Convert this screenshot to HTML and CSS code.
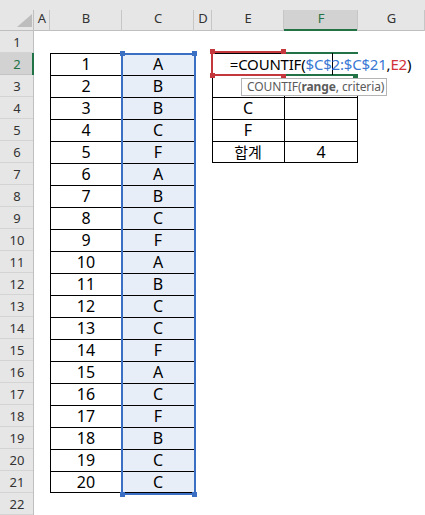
FILE: index.html
```html
<!DOCTYPE html>
<html lang="ko">
<head>
    <meta charset="UTF-8">
    <meta name="viewport" content="width=device-width, initial-scale=1.0">
    <title>COUNTIF 입력</title>
    <link rel="stylesheet" href="styles.css">
</head>
<body>

<div class="sheet">
    <!-- 열 머리글 -->
    <div class="head">
        <div class="corner"><span class="corner-tri"></span></div>
        <div class="col-hd">A</div>
        <div class="col-hd">B</div>
        <div class="col-hd">C</div>
        <div class="col-hd">D</div>
        <div class="col-hd">E</div>
        <div class="col-hd on">F</div>
        <div class="col-hd">G</div>
    </div>

    <!-- 행 (E2, E3 값은 수식/도움말에 가려져 보이지 않음) -->
    <div class="row"><div class="rh">1</div><div></div><div></div><div></div><div></div><div></div><div></div><div></div></div>
    <div class="row"><div class="rh on">2</div><div></div><div class="c t">1</div><div class="c t sel">A</div><div></div><div class="c t"></div><div class="c t r"></div><div></div></div>
    <div class="row"><div class="rh">3</div><div></div><div class="c t">2</div><div class="c t sel">B</div><div></div><div class="c t"></div><div class="c t r"></div><div></div></div>
    <div class="row"><div class="rh">4</div><div></div><div class="c t">3</div><div class="c t sel">B</div><div></div><div class="c t">C</div><div class="c t r"></div><div></div></div>
    <div class="row"><div class="rh">5</div><div></div><div class="c t">4</div><div class="c t sel">C</div><div></div><div class="c t">F</div><div class="c t r"></div><div></div></div>
    <div class="row"><div class="rh">6</div><div></div><div class="c t">5</div><div class="c t sel">F</div><div></div><div class="c t b ko">합계</div><div class="c t r b">4</div><div></div></div>
    <div class="row"><div class="rh">7</div><div></div><div class="c t">6</div><div class="c t sel">A</div><div></div><div></div><div></div><div></div></div>
    <div class="row"><div class="rh">8</div><div></div><div class="c t">7</div><div class="c t sel">B</div><div></div><div></div><div></div><div></div></div>
    <div class="row"><div class="rh">9</div><div></div><div class="c t">8</div><div class="c t sel">C</div><div></div><div></div><div></div><div></div></div>
    <div class="row"><div class="rh">10</div><div></div><div class="c t">9</div><div class="c t sel">F</div><div></div><div></div><div></div><div></div></div>
    <div class="row"><div class="rh">11</div><div></div><div class="c t">10</div><div class="c t sel">A</div><div></div><div></div><div></div><div></div></div>
    <div class="row"><div class="rh">12</div><div></div><div class="c t">11</div><div class="c t sel">B</div><div></div><div></div><div></div><div></div></div>
    <div class="row"><div class="rh">13</div><div></div><div class="c t">12</div><div class="c t sel">C</div><div></div><div></div><div></div><div></div></div>
    <div class="row"><div class="rh">14</div><div></div><div class="c t">13</div><div class="c t sel">C</div><div></div><div></div><div></div><div></div></div>
    <div class="row"><div class="rh">15</div><div></div><div class="c t">14</div><div class="c t sel">F</div><div></div><div></div><div></div><div></div></div>
    <div class="row"><div class="rh">16</div><div></div><div class="c t">15</div><div class="c t sel">A</div><div></div><div></div><div></div><div></div></div>
    <div class="row"><div class="rh">17</div><div></div><div class="c t">16</div><div class="c t sel">C</div><div></div><div></div><div></div><div></div></div>
    <div class="row"><div class="rh">18</div><div></div><div class="c t">17</div><div class="c t sel">F</div><div></div><div></div><div></div><div></div></div>
    <div class="row"><div class="rh">19</div><div></div><div class="c t">18</div><div class="c t sel">B</div><div></div><div></div><div></div><div></div></div>
    <div class="row"><div class="rh">20</div><div></div><div class="c t">19</div><div class="c t sel">C</div><div></div><div></div><div></div><div></div></div>
    <div class="row"><div class="rh">21</div><div></div><div class="c t b">20</div><div class="c t b sel">C</div><div></div><div></div><div></div><div></div></div>
    <div class="row"><div class="rh">22</div><div></div><div></div><div></div><div></div><div></div><div></div><div></div></div>

    <!-- 참조 범위 표시 ($C$2:$C$21) -->
    <div class="ref ref-blue">
        <span class="hdl tl"></span><span class="hdl tr"></span>
        <span class="hdl bl"></span><span class="hdl br"></span>
    </div>

    <!-- 활성 셀 F2 -->
    <div class="active"><span class="fill-hdl"></span></div>

    <!-- 참조 셀 E2 -->
    <div class="ref ref-red">
        <span class="hdl tl"></span><span class="hdl tr"></span>
        <span class="hdl bl"></span><span class="hdl br"></span>
    </div>

    <!-- 편집 중인 수식 -->
    <div class="editor">
        <span class="formula">=COUNTIF(<span class="f-blue">$C$<i class="caret"></i>2:$C$21</span>,<span class="f-red">E2</span>)</span>
    </div>

    <!-- 함수 도움말 -->
    <div class="tip">COUNTIF(<b>range</b>, criteria)</div>
</div>

</body>
</html>
```

FILE: styles.css
```css
body {
    margin: 0;
    font-family: "Noto Sans", "Noto Sans CJK KR", sans-serif;
    background-color: #ffffff;
    overflow: hidden;
}

.sheet {
    --cols: 34px 16px 72px 72px 18px 72px 74px 1fr;
    position: relative;
    width: 425px;
    height: 515px;
    overflow: hidden;
}

/* 열 머리글 */
.head {
    display: grid;
    grid-template-columns: var(--cols);
    height: 31px;
    background-color: #e6e6e6;
    box-shadow: inset 0 -1px 0 #bfbfbf;
}

.corner {
    margin-top: 10px;
    height: 21px;
    box-sizing: border-box;
    padding: 0 2px 4px 0;
    display: flex;
    justify-content: flex-end;
    align-items: flex-end;
    box-shadow: inset -1px 0 0 #bfbfbf;
}

.corner-tri {
    width: 15px;
    height: 13px;
    background-color: #bdbdbd;
    clip-path: polygon(100% 0, 100% 100%, 0 100%);
}

.col-hd {
    margin-top: 10px;
    height: 21px;
    line-height: 16px;
    text-align: center;
    font-size: 13px;
    color: #333333;
    box-shadow: inset -1px 0 0 #c6c6c6;
}

.col-hd.on {
    background-color: #d2d2d2;
    color: #217346;
    box-shadow: inset -1px 0 0 #c6c6c6, inset 0 -2px 0 #217346;
}

/* 행 */
.row {
    display: grid;
    grid-template-columns: var(--cols);
    height: 22px;
}

.rh {
    background-color: #e6e6e6;
    text-align: center;
    font-size: 13px;
    line-height: 22px;
    color: #333333;
    box-shadow: inset -1px 0 0 #bfbfbf, inset 0 -1px 0 #d4d4d4;
}

.rh.on {
    background-color: #d2d2d2;
    color: #217346;
    box-shadow: inset -2px 0 0 #217346, inset 0 -1px 0 #c4c4c4;
}

.c {
    text-align: center;
    font-size: 16px;
    line-height: 22px;
    color: #000000;
}

.c.ko {
    font-size: 15px;
}

.sel {
    background-color: #e8eef8;
}

/* 셀 테두리 */
.t { box-shadow: inset 1px 1px 0 #000000; }
.t.r { box-shadow: inset 1px 1px 0 #000000, inset -1px 0 0 #000000; }
.t.b { box-shadow: inset 1px 1px 0 #000000, inset 0 -1px 0 #000000; }
.t.r.b { box-shadow: inset 1px 1px 0 #000000, inset -1px -1px 0 #000000; }

/* 참조 범위 테두리 */
.ref {
    position: absolute;
    box-sizing: border-box;
    border: 2px solid;
}

.ref-blue {
    left: 121px;
    top: 53px;
    width: 75px;
    height: 442px;
    border-color: #3b6fc3;
}

.ref-red {
    left: 211px;
    top: 51px;
    width: 74px;
    height: 25px;
    border-color: #c4373d;
    z-index: 2;
}

.hdl {
    position: absolute;
    width: 5px;
    height: 5px;
}
.ref-blue .hdl { background-color: #3b6fc3; }
.ref-red .hdl { background-color: #c4373d; }
.hdl.tl { left: -3px; top: -4px; }
.hdl.tr { right: -3px; top: -4px; }
.hdl.bl { left: -3px; bottom: -4px; }
.hdl.br { right: -3px; bottom: -4px; }

/* 활성 셀 */
.active {
    position: absolute;
    left: 284px;
    top: 52px;
    width: 74px;
    height: 24px;
    box-sizing: border-box;
    border-top: 2px solid #217346;
    border-bottom: 2px solid #217346;
    z-index: 1;
}

.fill-hdl {
    position: absolute;
    right: 0;
    bottom: -4px;
    width: 5px;
    height: 5px;
    background-color: #217346;
}

/* 수식 입력 */
.editor {
    position: absolute;
    left: 284px;
    top: 54px;
    width: 73px;
    height: 20px;
    display: flex;
    justify-content: center;
    z-index: 3;
}

.formula {
    white-space: nowrap;
    background-color: #ffffff;
    font-size: 15px;
    letter-spacing: -0.2px;
    line-height: 20px;
    color: #000000;
    padding: 0 4px;
}

.f-blue { color: #3a78d4; }
.f-red { color: #d1343a; }

.caret {
    display: inline-block;
    width: 0;
    height: 22px;
    margin: -1px -1px -1px 0;
    vertical-align: top;
    border-left: 1px solid #000000;
}

/* 함수 도움말 */
.tip {
    position: absolute;
    left: 241px;
    top: 78px;
    width: 146px;
    height: 18px;
    box-sizing: border-box;
    border: 1px solid #b4b4b4;
    background-color: #ffffff;
    padding-left: 5px;
    font-size: 12px;
    letter-spacing: -0.1px;
    line-height: 15px;
    color: #5b5b5b;
    white-space: nowrap;
    z-index: 3;
}
```
